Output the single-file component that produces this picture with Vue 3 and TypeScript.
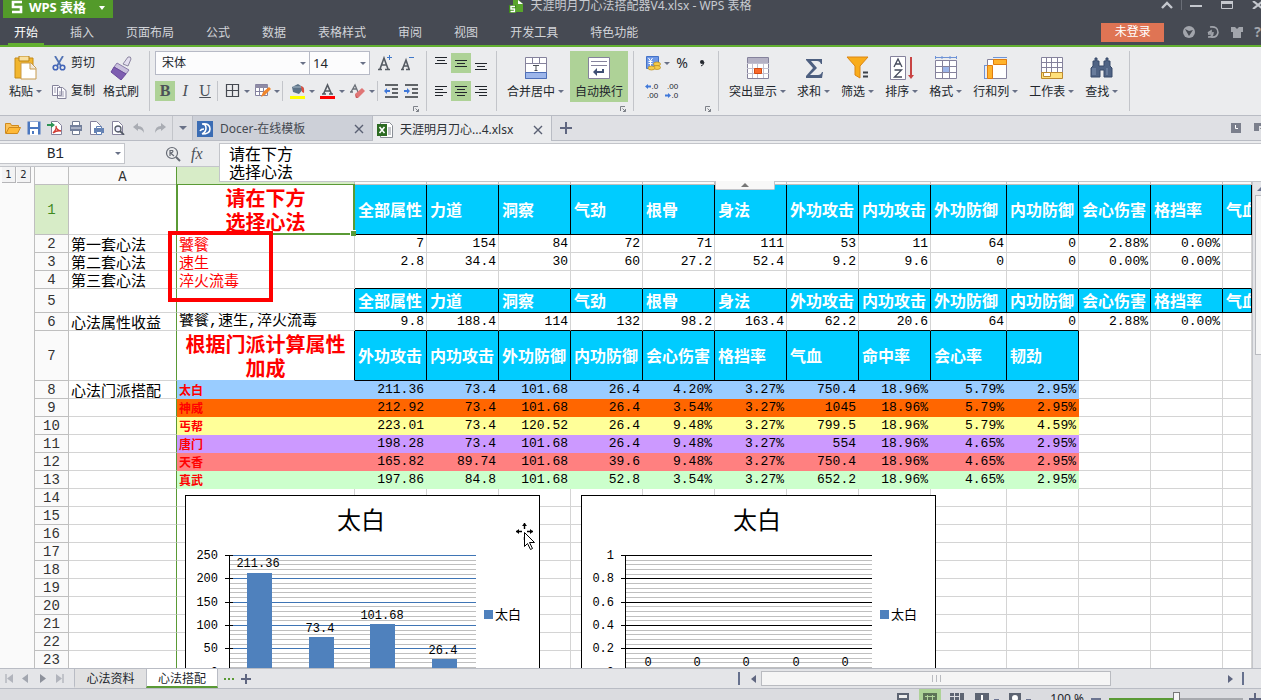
<script setup lang="ts">
import { ref } from 'vue'

interface Cell {
  text: string
  cls: string[]
}
interface Row {
  n: number
  height: string
  cells: Cell[]
}
interface Chart {
  id: string
  major: string
  ticks: string[]
  bars: { x: number; top: number }[]
  labels: { x: number; y: number; text: string }[]
}

const menus = ['开始', '插入', '页面布局', '公式', '数据', '表格样式', '审阅', '视图', '开发工具', '特色功能']
const letters = ['A', 'B', 'C', 'D', 'E', 'F', 'G', 'H', 'I', 'J', 'K', 'L', 'M', 'N', 'O']
const attrs = ['全部属性', '力道', '洞察', '气劲', '根骨', '身法', '外功攻击', '内功攻击', '外功防御', '内功防御', '会心伤害', '格挡率', '气血']
const schoolAttrs = ['外功攻击', '内功攻击', '外功防御', '内功防御', '会心伤害', '格挡率', '气血', '命中率', '会心率', '韧劲']

const content: Record<number, string[]> = {
  1: ['', '请在下方\n选择心法', ...attrs],
  2: ['第一套心法', '饕餮', '7', '154', '84', '72', '71', '111', '53', '11', '64', '0', '2.88%', '0.00%'],
  3: ['第二套心法', '速生', '2.8', '34.4', '30', '60', '27.2', '52.4', '9.2', '9.6', '0', '0', '0.00%', '0.00%'],
  4: ['第三套心法', '淬火流毒'],
  5: ['', '', ...attrs],
  6: ['心法属性收益', '饕餮,速生,淬火流毒', '9.8', '188.4', '114', '132', '98.2', '163.4', '62.2', '20.6', '64', '0', '2.88%', '0.00%'],
  7: ['', '根据门派计算属性加成', ...schoolAttrs],
  8: ['心法门派搭配', '太白', '211.36', '73.4', '101.68', '26.4', '4.20%', '3.27%', '750.4', '18.96%', '5.79%', '2.95%'],
  9: ['', '神威', '212.92', '73.4', '101.68', '26.4', '3.54%', '3.27%', '1045', '18.96%', '5.79%', '2.95%'],
  10: ['', '丐帮', '223.01', '73.4', '120.52', '26.4', '9.48%', '3.27%', '799.5', '18.96%', '5.79%', '4.59%'],
  11: ['', '唐门', '198.28', '73.4', '101.68', '26.4', '9.48%', '3.27%', '554', '18.96%', '4.65%', '2.95%'],
  12: ['', '天香', '165.82', '89.74', '101.68', '39.6', '9.48%', '3.27%', '750.4', '18.96%', '4.65%', '2.95%'],
  13: ['', '真武', '197.86', '84.8', '101.68', '52.8', '3.54%', '3.27%', '652.2', '18.96%', '4.65%', '2.95%'],
}

function cellClass(n: number, c: number): string[] {
  const cls: string[] = []
  const head = c >= 2 && (n === 1 || n === 5 || (n === 7 && c < 12))
  if (head) cls.push('head')
  else if (c >= 2) cls.push('num')
  if (c === 1) {
    if (n === 1 || n === 7) cls.push('big')
    if (n >= 2 && n <= 4) cls.push('red')
    if (n >= 8 && n <= 13) cls.push('school')
    if (n === 5 || n === 7) cls.push('line-right')
  }
  if (c >= 2 && (n === 4 || (n === 6 && c < 12))) cls.push('line-bottom')
  if (n >= 8 && n <= 13 && c >= 1 && c < 12) cls.push('fill', 'fill-' + n)
  if (c === 0) cls.push('frozen')
  return cls
}

const rows: Row[] = Array.from({ length: 23 }, (_, i) => {
  const n = i + 1
  const height = n === 1 || n === 7 ? 'tall' : n === 5 ? 'medium' : 'normal'
  return {
    n,
    height,
    cells: letters.map((_l, c) => ({ text: content[n]?.[c] ?? '', cls: cellClass(n, c) })),
  }
})

const charts: Chart[] = [
  {
    id: 'first',
    major: '#3f75b5',
    ticks: ['250', '200', '150', '100', '50', '0'],
    bars: [{ x: 62, top: 78 }, { x: 124, top: 142 }, { x: 185, top: 129 }, { x: 247, top: 164 }],
    labels: [
      { x: 73, y: 72, text: '211.36' },
      { x: 135, y: 137, text: '73.4' },
      { x: 197, y: 124, text: '101.68' },
      { x: 258, y: 159, text: '26.4' },
    ],
  },
  {
    id: 'second',
    major: '#000000',
    ticks: ['1', '0.8', '0.6', '0.4', '0.2', '0'],
    bars: [],
    labels: [67, 116, 165, 215, 264].map((x) => ({ x, y: 171, text: '0' })),
  },
]
const major = [60, 83, 107, 130, 153, 177]
const minor = Array.from({ length: 25 }, (_, i) => i).filter((i) => i % 5 !== 0).map((i) => Math.round(60 + i * 4.67))

const font = ref('宋体')
const size = ref('14')
const nameBox = ref('B1')
const formula = ref('请在下方\n选择心法')
const zoom = ref(50)
const sheetName = ref('心法搭配')
</script>

<template>
  <div class="app">
    <header class="titlebar">
      <button class="brand" type="button">
        <svg width="12" height="14" viewBox="0 0 12 14"><path d="M11 2H2v5h8v5H1" fill="none" stroke="#fff" stroke-width="2.6" /></svg>
        <span>WPS 表格</span>
        <svg class="brand-caret" width="6" height="4" viewBox="0 0 6 4"><path d="M0 0h6L3 4z" fill="#fff" /></svg>
      </button>
      <h1 class="title">
        <svg width="15" height="14" viewBox="0 0 15 14">
          <path d="M4 0h6l4 4v8H4z" fill="#59a52c" /><path d="M9 0l5 4H9z" fill="#fff" />
          <path d="M0 5h7v8H0z" fill="#3f8c1b" /><path d="M6 6.5H2v2.5h3.5v2.5H1.500" fill="none" stroke="#fff" stroke-width="1.4" />
        </svg>
        <span>天涯明月刀心法搭配器V4.xlsx - WPS 表格</span>
      </h1>
      <div class="window">
        <button type="button" aria-label="收起功能区"><svg width="12" height="8" viewBox="0 0 12 8"><path d="M1 7l5-5 5 5" fill="none" stroke="#c5c8ce" stroke-width="2.4" /></svg></button>
        <i class="window-sep"></i>
        <button type="button" aria-label="最小化"><svg width="12" height="8" viewBox="0 0 12 8"><path d="M0 4h12v2H0z" fill="#c5c8ce" /></svg></button>
        <button type="button" aria-label="最大化"><svg width="12" height="8" viewBox="0 0 12 8"><path d="M.5.5h11v7H.5z" fill="none" stroke="#c5c8ce" /><path d="M0 0h12v3H0z" fill="#c5c8ce" /></svg></button>
        <button type="button" aria-label="关闭"><svg width="12" height="8" viewBox="0 0 12 8"><path d="M1 0l10 8M11 0L1 8" stroke="#c5c8ce" stroke-width="2.200" /></svg></button>
      </div>
    </header>

    <nav class="menu">
      <button v-for="(m, i) in menus" :key="m" type="button" :class="{ active: i === 0 }">{{ m }}</button>
      <div class="account">
        <button class="login" type="button">未登录</button>
        <button type="button" aria-label="皮肤"><svg width="14" height="14" viewBox="0 0 14 14"><circle cx="7" cy="7" r="6" fill="#a2a5ac" /><path d="M3 4l4 7 4-6-4 1z" fill="#454951" /></svg></button>
        <button type="button" aria-label="稻壳"><svg width="14" height="14" viewBox="0 0 14 14"><path d="M4 2q8-1 8 5.500Q11 13 5 12H2q5 0 5-5M2 8l3-2v3H2" fill="none" stroke="#a2a5ac" stroke-width="1.600" /></svg></button>
        <button type="button" aria-label="主题"><svg width="14" height="14" viewBox="0 0 14 14"><path d="M1 2h4l2 2 2-2h4v5h-2v6H3V7H1z" fill="#a2a5ac" /></svg></button>
        <button class="help" type="button" aria-label="帮助">?</button>
      </div>
    </nav>

    <section class="ribbon">
      <div class="group clip">
        <button class="tool" type="button">
          <svg width="24" height="24" viewBox="0 0 24 24">
            <path d="M1 2h18v20H1z" fill="#f2b62e" stroke="#c48a17" /><path d="M5 0h10v5H5z" fill="#f8e0a0" stroke="#b98216" />
            <path d="M7 7h10l5 5v11H7z" fill="#fff" stroke="#c89a4d" /><path d="M16 7v6h6" fill="#efe6d8" stroke="#c89a4d" />
          </svg>
          <span>粘贴<i class="caret"></i></span>
        </button>
        <div class="stack small">
          <button type="button">
            <svg width="15" height="15" viewBox="0 0 15 15"><path d="M3 0l6 10M11 0L5 10" stroke="#5273b4" stroke-width="1.800" /><circle cx="3.500" cy="11.500" r="2.300" fill="none" stroke="#4264b8" stroke-width="1.600" /><circle cx="10.500" cy="11.500" r="2.300" fill="none" stroke="#4264b8" stroke-width="1.600" /></svg>
            <span>剪切</span>
          </button>
          <button type="button">
            <svg width="15" height="15" viewBox="0 0 15 15"><path d="M.5 1.500h6l3 3v7h-9zM5.500 3.500h5l3.500 3v8H5.500z" fill="#fafafd" stroke="#85839a" /><path d="M7 8h5M7 10h5M7 12h5M2 4h2M2 6h2M2 8h2" stroke="#a09eb2" /></svg>
            <span>复制</span>
          </button>
        </div>
        <button class="tool plain" type="button">
          <svg width="24" height="24" viewBox="0 0 24 24"><path d="M14 8l5-7q3-1 3 2l-3 7z" fill="#e4dff0" stroke="#8c86a0" /><path d="M8 7l12 7-3 4L5 11z" fill="#c9c0dd" stroke="#8a7cab" /><path d="M5 11l12 7-5 6L2 16z" fill="#7d5db0" stroke="#69499b" /></svg>
          <span>格式刷</span>
        </button>
      </div>

      <div class="group stack font">
        <div class="line">
          <label class="pick face"><select v-model="font" aria-label="字体"><option>宋体</option></select><i class="caret"></i></label>
          <label class="pick points"><select v-model="size" aria-label="字号"><option>14</option></select><i class="caret"></i></label>
          <button class="sq grow" type="button" aria-label="增大字号"><svg width="18" height="18" viewBox="0 0 18 18"><path d="M1 15.500h4M8 15.500h5M3 15L7 4l4 11M4.500 11h5" fill="none" stroke="#555b63" stroke-width="1.600" /><path d="M10 3.500h5M12.500 1v5" stroke="#3f78c9" /></svg></button>
          <button class="sq" type="button" aria-label="减小字号"><svg width="18" height="18" viewBox="0 0 18 18"><path d="M2 15.500h3M7 15.500h4M3.500 15L7 6l3 9M5 12h4" fill="none" stroke="#555b63" stroke-width="1.600" /><path d="M10 3.500h5" stroke="#3f78c9" /></svg></button>
        </div>
        <div class="line">
          <button class="sq letter on" type="button"><b>B</b></button>
          <button class="sq letter" type="button"><em>I</em></button>
          <button class="sq letter" type="button"><u>U</u></button>
          <i class="bar"></i>
          <button class="drop first" type="button" aria-label="边框"><svg width="16" height="16" viewBox="0 0 16 16"><path d="M1.500 1.500h12v12h-12zM7.500 1v13M1 7.500h13" fill="none" stroke="#454951" stroke-width="1.200" /></svg><i class="caret"></i></button>
          <button class="drop" type="button" aria-label="绘图边框"><svg width="16" height="16" viewBox="0 0 16 16"><path d="M.5 1.500h12v11H.5z" fill="#fff" stroke="#8582a0" /><path d="M0 2h13v3H0z" fill="#8f8ca6" /><path d="M0 8.500h12M4.500 5v8M8.500 5v8" stroke="#8582a0" /><path d="M6 14l2-5 6-5 2 2-6 6z" fill="#f0862c" /></svg><i class="caret"></i></button>
          <i class="bar"></i>
          <button class="drop first" type="button" aria-label="填充颜色"><svg width="16" height="16" viewBox="0 0 16 16"><path d="M2 4l6-3 6 4-5 6-6-2z" fill="#5d7388" /><path d="M3 4h9" stroke="#a8bac8" /><path d="M11 3q4 1 3 7l-2-1" fill="#e14d3c" /><path d="M0 13h15v3H0z" fill="#ffff00" /></svg><i class="caret"></i></button>
          <button class="drop" type="button" aria-label="字体颜色"><svg width="16" height="16" viewBox="0 0 16 16"><path d="M2 11h4M9 11h4M3.500 11l4-9 4 9M5 8h5" fill="none" stroke="#555b63" stroke-width="1.600" /><path d="M0 13h15v3H0z" fill="#ff0000" /></svg><i class="caret"></i></button>
          <button class="drop" type="button" aria-label="清除"><svg width="16" height="16" viewBox="0 0 16 16"><path d="M0 9h3M1 9l4-7 3 7M3 6h4" fill="none" stroke="#6b7078" stroke-width="1.300" /><path d="M5 11l7-6 3 3-7 7H6z" fill="#e07676" /><path d="M5 11l3 4H6z" fill="#c95b5b" /></svg><i class="caret"></i></button>
          <i class="bar"></i>
          <button class="sq indent" type="button" aria-label="减少缩进"><svg width="14" height="14" viewBox="0 0 14 14"><path d="M1 1h13M8 5h6M8 9h6M1 13h13" stroke="#33373d" stroke-width="1.400" /><path d="M0 7l3-3v2h3v2H3v2z" fill="#3f78d9" /></svg></button>
          <button class="sq" type="button" aria-label="增加缩进"><svg width="14" height="14" viewBox="0 0 14 14"><path d="M1 1h13M8 5h6M8 9h6M1 13h13" stroke="#33373d" stroke-width="1.400" /><path d="M6 7L3 4v2H0v2h3v2z" fill="#3f78d9" /></svg></button>
        </div>
        <svg class="launch" width="6" height="6" viewBox="0 0 6 6"><path d="M5 .5H.5V5M3 5.500h2.500V3M2.500 2.500l3 3" fill="none" stroke="#7d8188" /></svg>
      </div>

      <div class="group stack align">
        <div class="line">
          <button class="sq" type="button" aria-label="顶端对齐"><svg width="14" height="14" viewBox="0 0 14 14"><path d="M1 1.500h12M3 4.500h8M1 7.500h12" stroke="#22262c" /></svg></button>
          <button class="sq on" type="button" aria-label="垂直居中"><svg width="14" height="14" viewBox="0 0 14 14"><path d="M1 4.500h12M3 7.500h8M1 10.500h12" stroke="#22262c" /></svg></button>
          <button class="sq" type="button" aria-label="底端对齐"><svg width="14" height="14" viewBox="0 0 14 14"><path d="M1 7.500h12M3 10.500h8M1 13.500h12" stroke="#22262c" /></svg></button>
        </div>
        <div class="line">
          <button class="sq" type="button" aria-label="左对齐"><svg width="14" height="14" viewBox="0 0 14 14"><path d="M1 2.500h12M1 5.500h8M1 8.500h12M1 11.500h8" stroke="#22262c" /></svg></button>
          <button class="sq on" type="button" aria-label="居中"><svg width="14" height="14" viewBox="0 0 14 14"><path d="M1 2.500h12M3 5.500h8M1 8.500h12M3 11.500h8" stroke="#22262c" /></svg></button>
          <button class="sq" type="button" aria-label="右对齐"><svg width="14" height="14" viewBox="0 0 14 14"><path d="M1 2.500h12M5 5.500h8M1 8.500h12M5 11.500h8" stroke="#22262c" /></svg></button>
        </div>
      </div>

      <div class="group pad">
        <button class="tool" type="button">
          <svg width="24" height="24" viewBox="0 0 24 24"><path d="M1.500 1.500h21v21h-21z" fill="#fff" stroke="#85829c" /><path d="M8.500 1v6M15.500 1v6M1 7.500h22" stroke="#85829c" /><path d="M1.500 16.500h21v6h-21z" fill="#9db6ea" stroke="#4d6fb8" /><path d="M9 9.500h6M12 9v5M10.500 14.500h3" stroke="#4a4f57" /></svg>
          <span>合并居中<i class="caret"></i></span>
        </button>
        <button class="tool plain on" type="button">
          <svg width="24" height="24" viewBox="0 0 24 24"><path d="M1.500 1.500h21v21h-21z" fill="#fff" stroke="#85829c" /><path d="M4 5.500h16M4 9.500h16" stroke="#85829c" /><path d="M6 16l4-4v3h5v-2h2v4h-7v3z" fill="#3f4f74" /></svg>
          <span>自动换行</span>
        </button>
        <svg class="launch" width="6" height="6" viewBox="0 0 6 6"><path d="M5 .5H.5V5M3 5.500h2.500V3M2.500 2.500l3 3" fill="none" stroke="#7d8188" /></svg>
      </div>

      <div class="group stack number">
        <div class="line">
          <button class="drop" type="button" aria-label="货币"><svg width="16" height="16" viewBox="0 0 16 16"><path d="M1.500 1.500h12v12h-12z" fill="#6f98e6" stroke="#4472c8" /><path d="M3.500 3l2 3 2-3M3.500 6.500h4M3.500 8.500h4M5.500 6v5" fill="none" stroke="#fff" /><ellipse cx="12" cy="9" rx="3.500" ry="2" fill="#f6cc4b" stroke="#b98c1c" stroke-width=".7" /><ellipse cx="12" cy="12.500" rx="3.500" ry="2" fill="#f6cc4b" stroke="#b98c1c" stroke-width=".7" /><ellipse cx="6.500" cy="13" rx="3.500" ry="2" fill="#f6cc4b" stroke="#b98c1c" stroke-width=".7" /></svg><i class="caret"></i></button>
          <button class="sq sign" type="button">%</button>
          <button class="sq comma" type="button" aria-label="千位分隔"><svg width="8" height="10" viewBox="0 0 8 10"><circle cx="4" cy="4" r="2" fill="#22262c" /><path d="M6 4q0 3-3 4" fill="none" stroke="#22262c" /></svg></button>
        </div>
        <div class="line">
          <button class="sq dec" type="button">
            <span><svg width="6" height="5" viewBox="0 0 6 5"><path d="M0 2.500L3 0v1.500h3v2H3V5z" fill="#3f78d9" /></svg>.0</span><span>.00</span>
          </button>
          <button class="sq dec" type="button">
            <span>.00</span><span><svg width="6" height="5" viewBox="0 0 6 5"><path d="M6 2.500L3 0v1.500H0v2h3V5z" fill="#3f78d9" /></svg>.0</span>
          </button>
        </div>
        <svg class="launch" width="6" height="6" viewBox="0 0 6 6"><path d="M5 .5H.5V5M3 5.500h2.500V3M2.500 2.500l3 3" fill="none" stroke="#7d8188" /></svg>
      </div>

      <div class="group pad">
        <button class="tool" type="button">
          <svg width="24" height="24" viewBox="0 0 24 24"><path d="M1.500 1.500h21v21h-21z" fill="#fff" stroke="#85829c" /><path d="M2 2h20v5H2z" fill="#b4b1c4" /><path d="M1 7.500h22M1 12.500h22M1 17.500h22M6.500 8v14M11.500 8v14M17.500 8v14" stroke="#c2c0cf" /><path d="M8.500 12.500h7v5h-7z" fill="#f96a2c" stroke="#d34a12" /></svg>
          <span>突出显示<i class="caret"></i></span>
        </button>
        <button class="tool" type="button">
          <svg width="24" height="24" viewBox="0 0 24 24"><path d="M4 3h16v5h-1q-1-3-4-3H9l6 7-7 7h8q3 0 4-3h1l-1 6H4v-2l7-8-7-8z" fill="#4d5f80" /></svg>
          <span>求和<i class="caret"></i></span>
        </button>
        <button class="tool" type="button">
          <svg width="24" height="24" viewBox="0 0 24 24"><path d="M1 1h21l-8 9v12l-5-3v-9z" fill="#f9ac1b" stroke="#dc8612" /><path d="M17 16.500h5M17 20.500h5" stroke="#3c4149" stroke-width="2" /></svg>
          <span>筛选<i class="caret"></i></span>
        </button>
        <button class="tool" type="button">
          <svg width="24" height="24" viewBox="0 0 24 24"><path d="M.5.5h15v23H.5z" fill="#fff" stroke="#85829c" /><path d="M4 11l4-8 4 8M5.500 8h5M4.500 14h7l-7 7h7.500" fill="none" stroke="#454b5c" stroke-width="1.300" /><path d="M21 1v18" stroke="#c84343" stroke-width="2" /><path d="M18 19h6l-3 4z" fill="#c84343" /></svg>
          <span>排序<i class="caret"></i></span>
        </button>
        <button class="tool" type="button">
          <svg width="24" height="24" viewBox="0 0 24 24"><path d="M1 1.500h22M1.500 0v3M22.500 0v3M8 0v3M16 0v3" stroke="#6e93d6" /><path d="M1.500 4.500h21v18h-21z" fill="#fff" stroke="#85829c" /><path d="M8 10h8v7H8z" fill="#9db6ea" /><path d="M8.500 4v19M15.500 4v19M1 10.500h22M1 16.500h22" stroke="#85829c" /></svg>
          <span>格式<i class="caret"></i></span>
        </button>
        <button class="tool" type="button">
          <svg width="24" height="24" viewBox="0 0 24 24"><path d="M9 1.500h14M.500 9v14M0 9.500h3M0 22.500h3" stroke="#6e93d6" /><path d="M3.500 3.500h19v19h-19z" fill="#fff" stroke="#85829c" /><path d="M9.500 3.500h13v5h-13zM3.500 9.500h5v13h-5z" fill="#ffb32b" stroke="#e07d10" /></svg>
          <span>行和列<i class="caret"></i></span>
        </button>
        <button class="tool" type="button">
          <svg width="24" height="24" viewBox="0 0 24 24"><path d="M1.500 1.500h21v16h-21z" fill="#fff" stroke="#85829c" /><path d="M1 6.500h22M1 11.500h22M6.500 1v16M11.500 1v16M17.500 1v16" stroke="#85829c" /><path d="M1.500 16.500h21v6h-21z" fill="#ffe07a" stroke="#bd8a2e" /><path d="M3.500 16.500h7v4h-7z" fill="#fff" stroke="#bd8a2e" /></svg>
          <span>工作表<i class="caret"></i></span>
        </button>
        <button class="tool" type="button">
          <svg width="24" height="24" viewBox="0 0 24 24"><path d="M5 2h2v3h2v5h5V5h2V2h2v3h2v5l2 2v9h-8v-7h-4v7H1v-9l2-2V5h2z" fill="#4f6384" stroke="#384b6a" /><path d="M3 12v7M5 12v7M17 12v7" stroke="#8396b4" /></svg>
          <span>查找<i class="caret"></i></span>
        </button>
      </div>
    </section>

    <section class="docs">
      <div class="quick">
        <button type="button" aria-label="打开"><svg width="16" height="14" viewBox="0 0 16 14"><path d="M.5 12.500v-10h5l1 2h7v3" fill="#fbc25a" stroke="#d08a1c" /><path d="M1 12.500l3-6h11.500l-3 6z" fill="#ffb938" stroke="#d08a1c" /></svg></button>
        <button type="button" aria-label="保存"><svg width="14" height="14" viewBox="0 0 14 14"><path d="M.5.5h13v13H.5z" fill="#4a77c0" /><path d="M3 1h8v5H3zM3 8h8v6H3z" fill="#fff" /><path d="M5 10h2v3H5z" fill="#4a77c0" /></svg></button>
        <button type="button" aria-label="输出为PDF"><svg width="16" height="14" viewBox="0 0 16 14"><path d="M4.500.5h6l4 4v9h-10z" fill="#fff" stroke="#85829c" /><path d="M6 12q4-4 3-7 0 4 5 5-4-1-8 2" fill="none" stroke="#d13a32" stroke-width="1.300" /><path d="M0 3h4V1l4 3-4 3V5H0z" fill="#2f9455" /></svg></button>
        <button type="button" aria-label="打印"><svg width="14" height="14" viewBox="0 0 14 14"><path d="M3.500.5h7v4h-7zM3.500 9.500h7v4h-7z" fill="#fff" stroke="#727c92" /><path d="M1 4h12v6H1z" fill="#727f9b" /><path d="M2 7h10" stroke="#dfe3ec" /></svg></button>
        <button type="button" aria-label="直接打印"><svg width="16" height="14" viewBox="0 0 16 14"><path d="M1.500.5h6l4 4v9h-10z" fill="#fff" stroke="#85829c" /><path d="M5 7h10v5H5z" fill="#6482b4" /><path d="M7.500 5.500h5v2h-5zM7.500 10.500h5v3h-5z" fill="#fff" stroke="#6482b4" /></svg></button>
        <button type="button" aria-label="打印预览"><svg width="14" height="14" viewBox="0 0 14 14"><path d="M1.500.5h6l4 4v9h-10z" fill="#fff" stroke="#85829c" /><circle cx="7" cy="8" r="3" fill="#eef" stroke="#555b68" stroke-width="1.300" /><path d="M9 10l4 4" stroke="#555b68" stroke-width="1.800" /></svg></button>
        <button type="button" aria-label="撤消"><svg width="12" height="12" viewBox="0 0 12 12"><path d="M0 5l5-4v3q6 0 6 7-2-4-6-4v2z" fill="#a9acb3" /></svg></button>
        <button type="button" aria-label="恢复"><svg width="12" height="12" viewBox="0 0 12 12"><path d="M12 5L7 1v3q-6 0-6 7 2-4 6-4v2z" fill="#a9acb3" /></svg></button>
        <button class="more" type="button" aria-label="自定义"><i class="caret wide"></i></button>
      </div>
      <a class="doc" href="#docer">
        <svg width="16" height="16" viewBox="0 0 16 16"><path d="M0 0h16v16H0z" fill="#3a6cb4" /><path d="M5 3q8-1 8 5 0 5-8 5 M5 3q4 0 4 4 0 4-4 6M3 10q1-2 4-2" fill="none" stroke="#fff" stroke-width="1.600" /></svg>
        <span>Docer-在线模板</span>
        <svg class="close" width="10" height="10" viewBox="0 0 10 10"><path d="M1 1l8 8M9 1L1 9" stroke="#5a6073" stroke-width="1.400" /></svg>
      </a>
      <a class="doc current" href="#book">
        <svg width="16" height="16" viewBox="0 0 16 16"><path d="M3.500.5h9l3 3v12h-12z" fill="#fff" stroke="#8a8f96" /><path d="M11 6h3M11 8h3M11 10h3M11 12h3" stroke="#8a8f96" /><path d="M0 2h10v12H0z" fill="#2c6b22" /><path d="M2.500 5l5 6M7.500 5l-5 6" stroke="#fff" stroke-width="1.600" /></svg>
        <span>天涯明月刀心...4.xlsx</span>
        <svg class="close" width="10" height="10" viewBox="0 0 10 10"><path d="M1 1l8 8M9 1L1 9" stroke="#5a6073" stroke-width="1.400" /></svg>
      </a>
      <button class="plus" type="button" aria-label="新建"><svg width="12" height="12" viewBox="0 0 12 12"><path d="M6 0v12M0 6h12" stroke="#5f6680" stroke-width="2" /></svg></button>
      <div class="panes">
        <svg width="10" height="10" viewBox="0 0 10 10"><path d="M0 0h10v10H0z" fill="#7b7f8c" /><path d="M4.500 2v3.500H7" fill="none" stroke="#fff" /></svg>
        <svg width="10" height="10" viewBox="0 0 10 10"><path d="M0 0h10v3H5v5H0z" fill="#7b7f8c" /><path d="M6 5h4v4z" fill="#454951" /></svg>
      </div>
    </section>

    <section class="formula">
      <label class="namebox"><input v-model="nameBox" aria-label="名称框" /><i class="caret"></i></label>
      <button class="look" type="button" aria-label="浏览公式"><svg width="16" height="16" viewBox="0 0 16 16"><circle cx="7" cy="7" r="5.500" fill="none" stroke="#666b75" stroke-width="1.200" /><path d="M5 10V4.500h2.500q1.500 1.500-2 2.500L9 10" fill="none" stroke="#666b75" stroke-width="1.200" /><path d="M11 11l4 4" stroke="#666b75" stroke-width="2" /></svg></button>
      <button class="fx" type="button">fx</button>
      <textarea v-model="formula" class="editor" aria-label="编辑栏"></textarea>
      <button class="fold" type="button" aria-label="折叠编辑栏"><svg width="8" height="4" viewBox="0 0 8 4"><path d="M0 4h8L4 0z" fill="#777" /></svg></button>
    </section>

    <main class="work">
      <aside class="outline"><button type="button">1</button><button type="button">2</button></aside>
      <div class="sheet">
        <table>
          <colgroup>
            <col class="w-num" /><col class="w-a" /><col class="w-b" />
            <col v-for="i in 8" :key="i" class="w-c" />
            <col class="w-k" /><col class="w-c" /><col class="w-c" /><col class="w-c" /><col />
          </colgroup>
          <thead>
            <tr><th></th><th v-for="l in letters" :key="l" scope="col" :class="{ sel: l === 'B', frozen: l === 'A' }">{{ l }}</th></tr>
          </thead>
          <tbody>
            <tr v-for="r in rows" :key="r.n" :class="r.height">
              <th scope="row" :class="{ sel: r.n === 1 }">{{ r.n }}</th>
              <td v-for="(c, i) in r.cells" :key="i" :class="c.cls">{{ c.text }}</td>
            </tr>
          </tbody>
        </table>

        <div class="selection"><i></i></div>
        <div class="mark"></div>

        <svg v-for="ch in charts" :key="ch.id" class="chart" :class="ch.id" width="355" height="200" viewBox="0 0 355 200">
          <rect x=".5" y=".5" width="354" height="199" fill="#fff" stroke="#000" />
          <text class="chart-title" x="176" y="34" text-anchor="middle">太白</text>
          <path v-for="y in minor" :key="'m' + y" :d="`M45 ${y}.5H291`" stroke="#bfbfbf" />
          <path v-for="y in major" :key="'M' + y" :d="`M45 ${y}.5H291`" :stroke="ch.major" />
          <path d="M44.5 60V200" stroke="#000" />
          <path v-for="y in major" :key="'t' + y" :d="`M40 ${y}.5H48`" stroke="#000" />
          <text v-for="(t, i) in ch.ticks" :key="t" x="33" :y="major[i] + 4" text-anchor="end">{{ t }}</text>
          <rect v-for="b in ch.bars" :key="b.x" :x="b.x" :y="b.top" width="25" :height="177 - b.top" fill="#4f81bd" />
          <text v-for="l in ch.labels" :key="l.x" :x="l.x" :y="l.y" text-anchor="middle">{{ l.text }}</text>
          <rect x="299" y="115" width="9" height="9" fill="#4f81bd" />
          <text class="legend" x="310" y="124">太白</text>
        </svg>

        <svg class="pointer" width="20" height="28" viewBox="0 0 20 28">
          <path d="M8.500 0v6M8.500 14v3M0 8.500h6M11 8.500h6" stroke="#000" stroke-width="1.400" />
          <path d="M6 3l2.500-3L11 3zM3 6L0 8.500 3 11zM14 6l3 2.500-3 2.500z" fill="#000" />
          <path d="M8.500 9.500v14l3-3 3 6 2-1-3-6h5z" fill="#fff" stroke="#000" />
        </svg>
      </div>
      <div class="vscroll">
        <svg width="8" height="6" viewBox="0 0 8 6"><path d="M1 6l5-5 2 2v3z" fill="#6b7490" /></svg>
        <div class="vthumb"></div>
      </div>
    </main>

    <footer class="tabs">
      <div class="nav">
        <button type="button" aria-label="第一张"><svg width="8" height="9" viewBox="0 0 8 9"><path d="M1 0v9" stroke="#9ea2ab" /><path d="M8 0v9L2 4.500z" fill="#b1b4bc" /></svg></button>
        <button type="button" aria-label="上一张"><svg width="8" height="9" viewBox="0 0 8 9"><path d="M6 0v9L0 4.500z" fill="#a2a6af" /></svg></button>
        <button type="button" aria-label="下一张"><svg width="8" height="9" viewBox="0 0 8 9"><path d="M1 0v9l6-4.500z" fill="#8d919b" /></svg></button>
        <button type="button" aria-label="最后一张"><svg width="8" height="9" viewBox="0 0 8 9"><path d="M7 0v9" stroke="#9ea2ab" /><path d="M0 0v9l6-4.500z" fill="#b1b4bc" /></svg></button>
      </div>
      <button v-for="s in ['心法资料', '心法搭配']" :key="s" class="tab" :class="{ current: sheetName === s }" type="button" @click="sheetName = s">{{ s }}</button>
      <button class="dots" type="button" aria-label="更多工作表"><i></i><i></i><i></i></button>
      <button type="button" aria-label="新建工作表"><svg width="10" height="10" viewBox="0 0 10 10"><path d="M5 0v10M0 5h10" stroke="#5f6680" stroke-width="2" /></svg></button>
      <div class="hscroll">
        <i class="split"></i>
        <svg width="5" height="8" viewBox="0 0 5 8"><path d="M5 0v8L0 4z" fill="#5f6680" /></svg>
        <div class="track"><div class="thumb"><i></i><i></i><i></i></div></div>
        <svg width="5" height="8" viewBox="0 0 5 8"><path d="M0 0v8l5-4z" fill="#5f6680" /></svg>
        <i class="split"></i>
      </div>
    </footer>

    <div class="status">
      <button type="button" aria-label="全屏"><svg width="14" height="13" viewBox="0 0 14 13"><path d="M1 0h12v13H1z" fill="#5d6472" /><path d="M3 2h8v3H3z" fill="#eee" /></svg></button>
      <button class="on" type="button" aria-label="普通视图"><svg width="14" height="13" viewBox="0 0 14 13"><path d="M0 0h14v13H0z" fill="#5d7256" /><path d="M2 3.500h10M4.500 2v9M9.500 2v9M2 7.500h10" stroke="#b0d39a" /></svg></button>
      <button type="button" aria-label="分页预览"><svg width="14" height="13" viewBox="0 0 14 13"><path d="M0 0h4v3H0zM5 0h4v3H5zM10 0h4v13h-4zM0 4h4v3H0zM5 4h4v3H5z" fill="#5d6472" /></svg></button>
      <button class="view" type="button" aria-label="阅读模式"><svg width="14" height="13" viewBox="0 0 14 13"><path d="M0 0h14v13H0z" fill="#5d6472" /><path d="M6 2h2v9H6z" fill="#fff" /></svg><i class="dash"></i></button>
      <button class="view" type="button" aria-label="护眼模式"><svg width="12" height="13" viewBox="0 0 12 13"><path d="M0 0h12v13H0z" fill="#5d6472" /><circle cx="6" cy="5" r="3" fill="#fff" /></svg><i class="dash"></i></button>
      <span class="percent">100 %</span>
      <i class="dash minus"></i>
      <input v-model="zoom" type="range" aria-label="显示比例" />
      <svg class="zoom-in" width="12" height="12" viewBox="0 0 12 12"><path d="M6 0v12M0 6h12" stroke="#5f6680" stroke-width="2" /></svg>
    </div>
  </div>
</template>

<style>
body {
  margin: 0;
  overflow: hidden;
}
</style>

<style scoped>
* {
  box-sizing: border-box;
}
.app {
  display: flex;
  flex-direction: column;
  height: 100vh;
  overflow: hidden;
  background: #ebecee;
  color: #22262c;
  font: 12px/16px "Noto Sans", "Noto Sans CJK SC", sans-serif;
}
button,
input,
select,
textarea {
  font: inherit;
  color: inherit;
  border: 0;
  border-radius: 0;
  background: none;
  padding: 0;
  margin: 0;
  outline: 0;
}
button {
  display: flex;
  align-items: center;
  justify-content: center;
  white-space: nowrap;
}
svg {
  display: block;
  flex: none;
}
.caret {
  flex: none;
  border: 3px solid transparent;
  border-top: 3px solid #697187;
  border-bottom: 0;
}

/* Title bar */
.titlebar {
  display: grid;
  grid-template-columns: 1fr auto 1fr;
  flex: none;
  height: 18px;
  background: #464a53;
}
.brand {
  justify-self: start;
  width: 110px;
  height: 18px;
  margin-left: 3px;
  gap: 6px;
  background: #539a2a;
  color: #fff;
  font-size: 13px;
  font-weight: 700;
  line-height: 14px;
  align-items: flex-start;
}
.brand-caret {
  margin: 6px 0 0 7px;
}
.title {
  display: flex;
  gap: 6px;
  height: 12px;
  margin: 0;
  color: #c8cbd1;
  font-size: 12px;
  font-weight: 400;
  line-height: 12px;
}
.window {
  display: flex;
  justify-content: flex-end;
  gap: 19px;
  height: 10px;
  margin-right: -3px;
  overflow: hidden;
}
.window-sep {
  width: 1px;
  background: #6a6e77;
  margin: 0 -11px;
}

/* Menu row */
.menu {
  display: flex;
  flex: none;
  gap: 20px;
  height: 29px;
  padding-left: 8px;
  background: #464a53;
  border-bottom: 2px solid #62b030;
  color: #d2d4d9;
}
.menu > button {
  padding: 4px 6px 0;
  border-bottom: 2px solid transparent;
}
.menu > .active {
  color: #fff;
  border-bottom-color: #62b030;
}
.account {
  display: flex;
  flex: 1;
  justify-content: flex-end;
  gap: 10px;
  align-items: center;
  padding-top: 1px;
}
.login {
  width: 63px;
  height: 19px;
  margin-right: 8px;
  background: #df7454;
  color: #fff;
}
.help {
  color: #a2a5ac;
  font-size: 14px;
  font-weight: 700;
}

/* Ribbon */
.ribbon {
  display: flex;
  flex: none;
  height: 69px;
  padding-top: 4px;
  border-bottom: 1px solid #b9bcc4;
  background: #ebecee;
}
.group {
  position: relative;
  display: flex;
  align-items: flex-start;
  height: 60px;
  border-right: 1px solid #c3c5ca;
}
.clip {
  padding: 0 5px 0 4px;
}
.pad {
  padding: 0 5px;
}
.tool {
  flex-direction: column;
  gap: 4px;
  height: 51px;
  padding: 2px 6px 0 5px;
}
.tool span {
  display: flex;
  align-items: center;
}
.tool .caret {
  margin-left: 3px;
}
.tool.plain {
  padding-right: 5px;
}
.clip .plain {
  margin-left: 3px;
}
.on {
  background: #aed297;
}
.stack {
  display: flex;
  flex-direction: column;
}
.stack.group {
  gap: 6px;
}
.small {
  gap: 4px;
  margin-left: 4px;
}
.small button {
  gap: 4px;
  height: 24px;
}
.line {
  display: flex;
  align-items: center;
  height: 20px;
}
.line:first-child {
  height: 24px;
}
.font {
  padding: 0 5px;
}
.pick {
  display: flex;
  align-items: center;
  height: 24px;
  border: 1px solid #b7bac6;
  background: #fcfcfd;
}
.pick select {
  flex: 1;
  min-width: 0;
  height: 22px;
  padding-left: 6px;
  appearance: none;
}
.pick .caret {
  margin-right: 3px;
}
.face {
  width: 154px;
  border-right: 0;
}
.points {
  width: 61px;
}
.points select {
  padding-left: 3px;
  font-size: 13px;
}
.sq {
  width: 20px;
  height: 20px;
}
.grow {
  margin-left: 6px;
  margin-right: 2px;
}
.letter {
  font: 16px/18px "Liberation Serif", serif;
  color: #4c5158;
}
.bar {
  width: 1px;
  height: 20px;
  background: #c3c5ca;
}
.letter + .bar {
  margin-left: 2px;
}
.drop {
  width: 30px;
  height: 20px;
  gap: 3px;
}
.drop.first {
  margin-left: 4px;
}
.indent {
  margin-left: 3px;
}
.launch {
  position: absolute;
  right: 7px;
  bottom: -1px;
}
.align {
  padding: 0 5px 0 4px;
}
.number {
  padding: 0 6px 0 8px;
}
.sign {
  font-size: 14px;
}
.dec {
  flex-direction: column;
  align-items: flex-end;
  padding-right: 4px;
  font: 8px/9px "Liberation Sans", sans-serif;
}
.dec span {
  display: flex;
  align-items: center;
}

/* Document tabs */
.docs {
  display: flex;
  flex: none;
  height: 25px;
  background: #dfe0e4;
  border-bottom: 1px solid #b9bcc4;
}
.quick {
  display: flex;
  width: 192px;
  padding-left: 2px;
}
.quick button {
  width: 21px;
}
.quick .more {
  border-left: 1px solid #c3c5ca;
  margin-left: 2px;
  flex: 1;
}
.caret.wide {
  border-width: 4px 4px 0;
}
.doc {
  display: flex;
  align-items: center;
  width: 180px;
  padding: 2px 8px 0 4px;
  gap: 7px;
  border-left: 1px solid #b9bcc4;
  background: #cdd0d8;
  color: #454951;
  text-decoration: none;
  font-size: 12px;
}
.doc span {
  flex: 1;
  white-space: nowrap;
}
.current.doc {
  width: 180px;
  border-right: 1px solid #b9bcc4;
  background: #ebecee;
  height: 25px;
  color: #2c3036;
}
.plus {
  margin-left: 8px;
}
.panes {
  display: flex;
  flex: 1;
  justify-content: flex-end;
  align-items: center;
  gap: 13px;
  margin-right: -3px;
}

/* Formula bar */
.formula {
  position: relative;
  z-index: 3;
  display: flex;
  align-items: center;
  flex: none;
  height: 26px;
  border-bottom: 1px solid #c3c5ca;
}
.namebox {
  display: flex;
  align-items: center;
  width: 125px;
  height: 21px;
  border: 1px solid #c3c5ca;
  border-left: 0;
  background: #fff;
}
.namebox input {
  flex: 1;
  min-width: 0;
  text-align: center;
  font: 14px/18px "Liberation Mono", monospace;
  padding-right: 4px;
}
.namebox .caret {
  margin-right: 3px;
}
.look {
  margin-left: 40px;
}
.fx {
  margin-left: 10px;
  font: italic 16px/18px "Liberation Serif", serif;
  color: #4c5158;
}
.editor {
  position: absolute;
  left: 219px;
  top: 2px;
  width: calc(100% - 219px);
  height: 39px;
  padding: 0 9px;
  border: 1px solid #c3c5ca;
  border-right: 0;
  background: #fff;
  color: #000;
  font: 16px/18px "Noto Sans CJK SC", sans-serif;
  resize: none;
  overflow: hidden;
}
.fold {
  position: absolute;
  left: 715px;
  top: 40px;
  width: 60px;
  height: 9px;
  background: #f8f8f8;
  border: 1px solid #c3c5ca;
  border-top: 0;
  border-radius: 0 0 2px 2px;
}

/* Worksheet */
.work {
  display: flex;
  flex: 1;
  min-height: 0;
  background: #fff;
}
.outline {
  display: flex;
  gap: 1px;
  flex: none;
  width: 34px;
  padding-left: 2px;
  background: #fafafa;
}
.outline button {
  width: 14px;
  height: 16px;
  background: #f3f3f4;
  border-right: 1px solid #b5b5b8;
  border-bottom: 1px solid #b5b5b8;
  font: 10px/14px "DejaVu Sans", sans-serif;
}
.sheet {
  position: relative;
  flex: 1;
  min-width: 0;
  overflow: hidden;
}
table {
  width: 100%;
  table-layout: fixed;
  border-collapse: separate;
  border-spacing: 0;
  font: 15px/16px "Liberation Mono", "Noto Sans CJK SC", monospace;
}
.w-num { width: 35px; }
.w-a { width: 108px; }
.w-b { width: 178px; }
.w-c { width: 72px; }
.w-k { width: 76px; }
th,
td {
  height: 18px;
  padding: 1px 2px 0;
  overflow: hidden;
  white-space: nowrap;
  border-right: 1px solid #d4d4d4;
  border-bottom: 1px solid #d4d4d4;
}
th {
  padding: 1px 0 0;
  background: #fafafa;
  border-color: #bfbfbf;
  color: #333;
  font-size: 14px;
  font-weight: 400;
  text-align: center;
}
thead th {
  padding-top: 3px;
  line-height: 14px;
}
tbody th:first-child,
thead th:first-child {
  border-left: 1px solid #bfbfbf;
}
thead th.sel,
tbody th.sel {
  background: #d7ecc7;
  color: #3e8a1c;
}
td {
  color: #000;
}
.tall td,
.tall th {
  height: 50px;
}
.medium td,
.medium th {
  height: 24px;
}
.frozen {
  border-right-color: #5a9a35;
}
.frozen,
.red,
.school {
  font-family: "Noto Sans CJK SC", sans-serif;
}
thead .frozen {
  font-family: "Liberation Mono", monospace;
}
.num {
  font-size: 13px;
  text-align: right;
}
.head {
  padding: 0 3px 1px;
  background: #00ccff;
  border-color: #000;
  color: #fff;
  font: 700 16px/20px "Noto Sans CJK SC", sans-serif;
}
.big {
  color: #f00;
  font: 700 20px/24px "Noto Sans CJK SC", sans-serif;
  padding: 0 8px;
  text-align: center;
  overflow: visible;
  white-space: pre-wrap;
}
.big.line-right {
  border-bottom-color: #99ccff;
}
.red {
  color: #f00;
}
.school {
  color: #f00;
  font-size: 12px;
  font-weight: 700;
}
.line-right {
  border-right-color: #000;
}
.line-bottom {
  border-bottom-color: #000;
}
.fill {
  border-color: transparent;
}
.fill-8 { background: #99ccff; }
.fill-9 { background: #ff6600; }
.fill-10 { background: #ffff99; }
.fill-11 { background: #cc99ff; }
.fill-12 { background: #ff8080; }
.fill-13 { background: #ccffcc; }
.selection {
  position: absolute;
  left: 142px;
  top: 17px;
  width: 179px;
  height: 51px;
  border: 2px solid #5a9a35;
  border-top-width: 1px;
}
.selection i {
  position: absolute;
  right: -3px;
  bottom: -3px;
  width: 6px;
  height: 6px;
  background: #5a9a35;
  border: 1px solid #fff;
  border-width: 1px 0 0 1px;
}
.mark {
  position: absolute;
  left: 134px;
  top: 64px;
  width: 105px;
  height: 71px;
  border: 4px solid #f00;
}
.chart {
  position: absolute;
  top: 328px;
  font: 12px "Liberation Mono", "Noto Sans CJK SC", monospace;
}
.chart.first { left: 151px; }
.chart.second { left: 547px; }
.chart-title {
  font-size: 24px;
}
.legend {
  font-size: 13px;
}
.pointer {
  position: absolute;
  left: 482px;
  top: 356px;
}
.vscroll {
  flex: none;
  width: 9px;
  padding: 18px 0 0 2px;
  border-left: 1px solid #c3c5ca;
  background: #e4e5e8;
}
.vscroll svg {
  margin-left: 1px;
}
.vthumb {
  height: 160px;
  margin-top: 4px;
  border: 1px solid #b9bbc0;
  border-right: 0;
  background: #f5f5f5;
}

/* Sheet tabs */
.tabs {
  display: flex;
  align-items: stretch;
  flex: none;
  height: 21px;
  border-top: 1px solid #b9bcc4;
  border-bottom: 1px solid #b9bcc4;
  background: #e4e5e8;
}
.nav {
  display: flex;
  gap: 9px;
  width: 74px;
  padding-left: 5px;
}
.tab {
  width: 72px;
  padding-top: 2px;
  border-left: 1px solid #b9bcc4;
  border-bottom: 2px solid transparent;
  background: #e1e1e2;
}
.tab.current {
  border-right: 1px solid #b9bcc4;
  border-bottom-color: #5a9a35;
  background: #fff;
}
.dots {
  gap: 2px;
  margin: 0 7px 0 6px;
}
.dots i {
  width: 2px;
  height: 2px;
  background: #5a9a35;
}
.hscroll {
  display: flex;
  flex: 1;
  align-items: center;
  margin-left: 487px;
  padding-right: 17px;
}
.split {
  width: 2px;
  height: 13px;
  background: #66718e;
}
.split + svg {
  margin: 0 5px 0 11px;
}
.track + svg + .split {
  margin-left: 9px;
}
.track {
  flex: 1;
}
.thumb {
  display: flex;
  align-items: center;
  justify-content: center;
  gap: 3px;
  width: 75%;
  height: 15px;
  border: 1px solid #b9bbc0;
  background: #f5f5f5;
}
.thumb i {
  width: 1px;
  height: 7px;
  background: #b9bbc0;
}

/* Status bar */
.status {
  display: flex;
  align-items: flex-start;
  justify-content: flex-end;
  flex: none;
  height: 11px;
  overflow: hidden;
  background: #dbdce0;
}
.status button {
  align-items: flex-start;
  width: 22px;
  height: 24px;
  margin-right: 5px;
  padding-top: 4px;
}
.status .view {
  width: 28px;
  gap: 5px;
}
.dash {
  width: 5px;
  height: 2px;
  margin-top: 6px;
  background: #6b7490;
}
.percent {
  margin: 2px 7px 0 11px;
}
.dash.minus {
  width: 10px;
  margin-top: 9px;
}
.status input {
  appearance: none;
  width: 134px;
  height: 16px;
  margin: 2px 6px 0 8px;
  background: linear-gradient(90deg, #5a9a35 50%, #a7a9ae 50%) center / 100% 2px no-repeat;
}
.status input::-webkit-slider-thumb {
  appearance: none;
  width: 7px;
  height: 14px;
  border: 1px solid #777;
  background: #f5f5f5;
}
.zoom-in {
  margin: 4px 0 0;
}
</style>
